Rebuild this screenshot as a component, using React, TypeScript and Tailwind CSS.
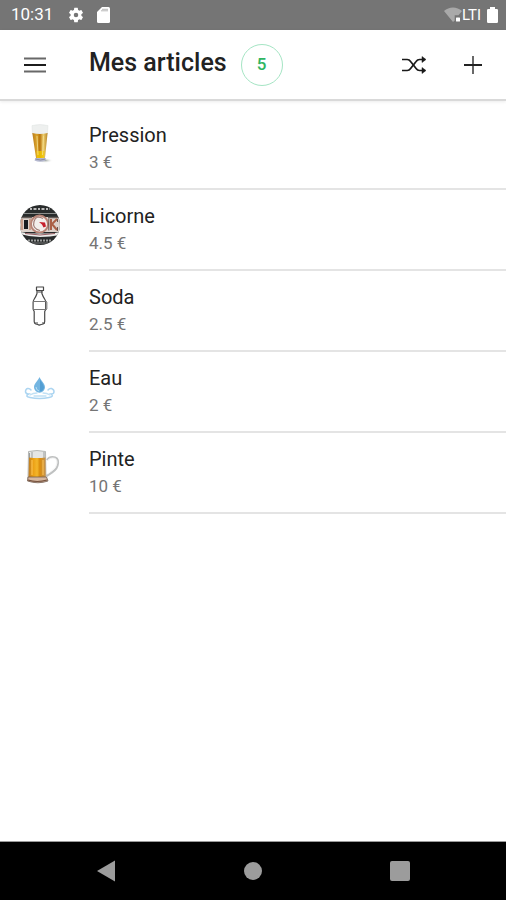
import React from "react";

function GearIcon() {
  return (
    <svg viewBox="0 0 24 24" className="h-[18px] w-[18px]" fill="#fff" aria-hidden="true">
      <path d="M19.14 12.94c.04-.3.06-.61.06-.94 0-.32-.02-.64-.07-.94l2.03-1.58a.49.49 0 0 0 .12-.61l-1.92-3.32a.49.49 0 0 0-.59-.22l-2.39.96c-.5-.38-1.03-.7-1.62-.94l-.36-2.54a.48.48 0 0 0-.48-.41h-3.84a.47.47 0 0 0-.47.41l-.36 2.54c-.59.24-1.13.57-1.62.94l-2.39-.96a.48.48 0 0 0-.59.22L2.74 8.87a.47.47 0 0 0 .12.61l2.03 1.58c-.05.3-.09.63-.09.94s.02.64.07.94l-2.03 1.58a.49.49 0 0 0-.12.61l1.92 3.32c.12.22.37.29.59.22l2.39-.96c.5.38 1.03.7 1.62.94l.36 2.54c.05.24.24.41.48.41h3.84c.24 0 .44-.17.47-.41l.36-2.54c.59-.24 1.13-.56 1.62-.94l2.39.96c.22.08.47 0 .59-.22l1.92-3.32a.47.47 0 0 0-.12-.61zM12 15a3 3 0 1 1 0-6 3 3 0 0 1 0 6z" />
    </svg>
  );
}

function SdCardIcon() {
  return (
    <svg viewBox="0 0 13 16" className="h-4 w-[13px]" aria-hidden="true">
      <path d="M5 0h6.500A1.500 1.500 0 0 1 13 1.500v13a1.500 1.500 0 0 1-1.500 1.500h-10A1.500 1.500 0 0 1 0 14.500V5z" fill="#fff" />
      <path d="M5 2.300h6M4 3.800h7" stroke="#b8b8b8" strokeWidth="1" />
    </svg>
  );
}

function WifiIcon() {
  return (
    <svg viewBox="0 0 18 16" className="h-4 w-[18px]" aria-hidden="true">
      <path d="M0 4C5-.8 13-.8 18 4l-3.500 4.300h-3.800v5.200L9 15z" fill="#a9a9a9" />
      <rect x="12" y="10.500" width="4" height="4" rx=".6" fill="#fff" />
    </svg>
  );
}

function BatteryIcon() {
  return (
    <svg viewBox="0 0 11 16" className="h-4 w-[11px]" fill="#fff" aria-hidden="true">
      <path d="M3 0h5v2h1.500A1.300 1.300 0 0 1 11 3.300v11.400A1.300 1.300 0 0 1 9.700 16H1.300A1.300 1.300 0 0 1 0 14.700V3.300A1.300 1.300 0 0 1 1.300 2H3z" />
    </svg>
  );
}

function MenuIcon() {
  return (
    <svg viewBox="0 0 24 18" className="h-[18px] w-6" fill="none" aria-hidden="true">
      <path d="M1 2.500h22M1 15.500h22" stroke="#686868" strokeWidth="2" />
      <path d="M1 9h22" stroke="#1c1c1c" strokeWidth="2" />
    </svg>
  );
}

function ShuffleIcon() {
  return (
    <svg viewBox="0 0 26 20" className="h-5 w-[26px]" fill="none" stroke="#1a1a1a" strokeWidth="1.700" strokeLinejoin="round" aria-hidden="true">
      <path d="M1 4.500h5.200c1.600 0 2.500.6 3.400 1.900l5.500 7.200c.9 1.300 1.900 1.900 3.500 1.900H24" />
      <path d="M1 15.500h5.200c1.600 0 2.500-.6 3.400-1.900l5.500-7.200c.9-1.300 1.900-1.900 3.500-1.900H24" />
      <path d="M21 1.500l4 3-4 3zM21 12.500l4 3-4 3z" fill="#1a1a1a" strokeWidth=".5" />
    </svg>
  );
}

function PlusIcon() {
  return (
    <svg viewBox="0 0 20 20" className="h-5 w-5" fill="none" aria-hidden="true">
      <path d="M10 1v18" stroke="#686868" strokeWidth="2" />
      <path d="M1 10h18" stroke="#222" strokeWidth="2" />
    </svg>
  );
}

function BeerGlass() {
  return (
    <svg viewBox="0 0 40 40" className="h-10 w-10" aria-hidden="true">
      <defs>
        <linearGradient id="lager" x1="0" x2="1">
          <stop offset="0" stopColor="#b97d1c" />
          <stop offset=".3" stopColor="#dca52c" />
          <stop offset=".5" stopColor="#b8750e" />
          <stop offset=".72" stopColor="#efd070" />
          <stop offset="1" stopColor="#b78629" />
        </linearGradient>
        <radialGradient id="glassShade">
          <stop offset="0" stopColor="#99a19b" />
          <stop offset="1" stopColor="#fff" stopOpacity="0" />
        </radialGradient>
      </defs>
      <ellipse cx="25" cy="36.500" rx="8" ry="2.600" fill="url(#glassShade)" />
      <path d="M12 1.500q8-2 16 0l-.6 8.500h-15z" fill="#eef0ef" stroke="#dfe2e1" strokeWidth=".5" />
      <path d="M12.300 9q7.500 2 15.300 0L25 34h-9z" fill="url(#lager)" />
      <path d="M16.500 27h8L24 34h-7z" fill="#f2c900" opacity=".8" />
      <path d="M17 12l1 19M23.500 12l-1 19" stroke="#f5df92" strokeWidth=".8" />
      <path d="M15.500 34h10v2.500q-5.500 2.500-11 0z" fill="#b5b9d0" />
      <path d="M15.500 35q5 2 10 0" stroke="#767985" fill="none" strokeWidth=".7" />
    </svg>
  );
}

function LicorneLabel() {
  return (
    <svg viewBox="0 0 40 40" className="h-10 w-10" aria-hidden="true">
      <defs>
        <clipPath id="labelDisc"><circle cx="20" cy="20" r="20" /></clipPath>
      </defs>
      <g clipPath="url(#labelDisc)">
        <rect width="40" height="40" fill="#292c2c" />
        <path d="M10 4h20" stroke="#bbb" strokeWidth="1.800" strokeDasharray="2 1.500 3 1.500" />
        <path d="M4 8.500h32" stroke="#8b8e8c" strokeWidth="1" />
        <path d="M0 12h40v15H0z" fill="#ddd2cb" />
        <path d="M0 12.500h12M28 12.500h12" stroke="#665d59" strokeWidth="1.500" />
        <path d="M4 15h4v9H4z" fill="#171b20" />
        <path d="M2 14v11M10 14v11" stroke="#b97a60" strokeWidth="1.200" />
        <circle cx="19.500" cy="19" r="8.500" fill="#f3eeeb" stroke="#b88375" strokeWidth="1.800" />
        <path d="M23 13.500q-7-4-9 3t6 9" stroke="#a17c76" strokeWidth="1.200" fill="none" />
        <path d="M19 17l6 .5 1 4-2.500 1-1.500-3z" fill="#c61f2c" />
        <path d="M31 14v11M37 14l-5 5 5 6" stroke="#aa6046" strokeWidth="2" fill="none" />
        <path d="M28.800 13.500v12M37.500 14v3M37.500 22v4" stroke="#4e3732" strokeWidth=".8" />
        <path d="M1 27q5 1 10 1.500h18q6-.5 11-1.500v3q-10 2-20 2T0 29z" fill="#ededeb" />
        <path d="M5 28.500q15 3 30 0" stroke="#955c61" fill="none" strokeWidth="1" />
        <path d="M8 35.500h24" stroke="#9b9c9b" strokeWidth="1.800" strokeDasharray="2 1" />
        <path d="M12 38h16" stroke="#777" strokeWidth="1" />
      </g>
    </svg>
  );
}

function SodaBottle() {
  return (
    <svg viewBox="0 0 40 40" className="h-10 w-10" fill="none" stroke="#484848" strokeWidth="1.200" strokeLinejoin="round" aria-hidden="true">
      <path d="M16.500 1h7v3.500h-7zM17 4.500v3q-1 3-3 6-1 1.500-.8 3v7l1 2v10q0 2 1.500 2.500l2 .5 1.500.6 2-.6 2-.5q1.500-.5 1.500-2.500v-10l1-2v-7q.2-1.500-.8-3-2-3-3-6v-3" />
      <path d="M13.200 15.500h13.600M13.200 23.500h13.600" stroke="#777" />
      <path d="M17.500 6h5M15 37h3M22 37h3" />
      <path d="M13.200 16v7M26.800 16v7" stroke="#888" strokeWidth="1.200" />
    </svg>
  );
}

function WaterDrop() {
  return (
    <svg viewBox="0 -2 40 40" className="h-10 w-10" fill="none" aria-hidden="true">
      <path d="M19.500 8c1.200 3.600 5.500 6.400 5.500 10.200a5.500 5.500 0 0 1-11 0C14 14.400 18.300 11.600 19.500 8z" fill="#73b5e1" />
      <path d="M20 10.500c1.500 3 4 5 4 8a4.500 4.500 0 0 1-4 4z" fill="#529ed3" />
      <path d="M16 18q0 3 3 4" stroke="#b9def3" strokeWidth="1" />
      <path d="M11 21q-1.500-2-3.500-1.500T5.500 23q.5 2 3 2-4 2.500 1.500 3.500 9.500 2 19 0 5.500-1 2-3.500 3 0 3-2.300t-2.500-3.200q-2-.5-3.500 1.500" stroke="#acd5f1" strokeWidth="1.500" strokeLinecap="round" />
      <path d="M10 26q3-2 7-2M23 24q4 0 7 2M14 27h12" stroke="#c1e1f5" strokeWidth="1.300" strokeLinecap="round" />
    </svg>
  );
}

function BeerMug() {
  return (
    <svg viewBox="0 -1 40 40" className="h-10 w-10" aria-hidden="true">
      <defs>
        <linearGradient id="ale" x1="0" x2="1">
          <stop offset="0" stopColor="#b77b29" />
          <stop offset=".22" stopColor="#e99b10" />
          <stop offset=".5" stopColor="#f4b62a" />
          <stop offset=".65" stopColor="#db8d0c" />
          <stop offset="1" stopColor="#c39454" />
        </linearGradient>
      </defs>
      <path d="M27 11q2-3 5.500-3 6 0 5.500 6T32.500 23q-3 2-6 4" fill="none" stroke="#bfc1c1" strokeWidth="2.200" />
      <path d="M28 11q2-2 4.500-2 5 0 4.500 5T31.500 22l-4 3" fill="none" stroke="#f5f5f5" strokeWidth="1" />
      <path d="M8.500 2.500q8.500-2 17 0l.5 28H8z" fill="#e5e6e5" stroke="#a6a8a6" strokeWidth=".8" />
      <path d="M9.500 4v5M12 3v6M24 3v6" stroke="#9b9e9e" strokeWidth="1" />
      <path d="M9 8.500q8.500 1 16.500 0l.3 19.500H8.500z" fill="url(#ale)" />
      <path d="M12 11v15M23 11v15" stroke="#ffc65a" strokeWidth="1" />
      <path d="M8 28h18.500l1.500 4q-10 3.500-20.500 0z" fill="#d7b8a0" stroke="#725d50" strokeWidth=".8" />
      <path d="M8 31q9 3 19 0" stroke="#76523e" strokeWidth="1.200" fill="none" />
    </svg>
  );
}

const articles = [
  { name: "Pression", price: "3 €", Picture: BeerGlass },
  { name: "Licorne", price: "4.5 €", Picture: LicorneLabel },
  { name: "Soda", price: "2.5 €", Picture: SodaBottle },
  { name: "Eau", price: "2 €", Picture: WaterDrop },
  { name: "Pinte", price: "10 €", Picture: BeerMug },
];

export default function App() {
  return (
    <div className="flex min-h-screen flex-col bg-white font-[Roboto,sans-serif] text-[#222]">
      <div className="flex h-[30px] items-center bg-[#757575] pr-2 pl-[11px] text-white">
        <span className="text-[17px]">10:31</span>
        <span className="ml-3.5 flex items-center gap-3">
          <GearIcon />
          <SdCardIcon />
        </span>
        <span className="ml-auto flex items-center">
          <WifiIcon />
          <span className="text-[15px]">LTI</span>
          <span className="ml-1.5"><BatteryIcon /></span>
        </span>
      </div>

      <header className="flex h-[71px] items-center border-b-2 border-[#d9d9d9] px-[23px] shadow-[0_1px_3px_rgba(0,0,0,0.08)]">
        <button type="button" aria-label="Menu" className="flex"><MenuIcon /></button>
        <h1 className="ml-[42px] pb-1 text-[25px] leading-8 font-medium">Mes articles</h1>
        <span className="ml-3.5 flex h-[42px] w-[42px] items-center justify-center rounded-full border border-[#a5e5c4] text-[17px] font-medium text-[#2fb562]">5</span>
        <span className="ml-auto flex items-center gap-9">
          <button type="button" aria-label="Mélanger" className="flex"><ShuffleIcon /></button>
          <button type="button" aria-label="Ajouter" className="flex"><PlusIcon /></button>
        </span>
      </header>

      <main className="flex-1 pt-2">
        <ul>
          {articles.map(({ name, price, Picture }) => (
            <li key={name} className="flex pl-5">
              <span className="w-[69px] shrink-0 pt-[15px]"><Picture /></span>
              <div className="flex-1 border-b-2 border-[#e4e4e4] pt-3 pb-[13px]">
                <p className="text-xl leading-7">{name}</p>
                <p className="text-[17px] leading-[26px] text-[#757575]">{price}</p>
              </div>
            </li>
          ))}
        </ul>
      </main>

      <nav className="grid h-[59px] grid-cols-3 border-t border-[#9b9b9b] bg-black px-[33px]">
        <button type="button" aria-label="Retour" className="flex items-center justify-center">
          <svg viewBox="0 0 20 22" className="h-[22px] w-5" fill="#9c9c9c"><path d="M1 11L19 .5v21z" /></svg>
        </button>
        <button type="button" aria-label="Accueil" className="flex items-center justify-center">
          <span className="h-[18px] w-[18px] rounded-full bg-[#9c9c9c]" />
        </button>
        <button type="button" aria-label="Applications récentes" className="flex items-center justify-center">
          <span className="h-5 w-5 rounded-xs bg-[#9c9c9c]" />
        </button>
      </nav>
    </div>
  );
}
